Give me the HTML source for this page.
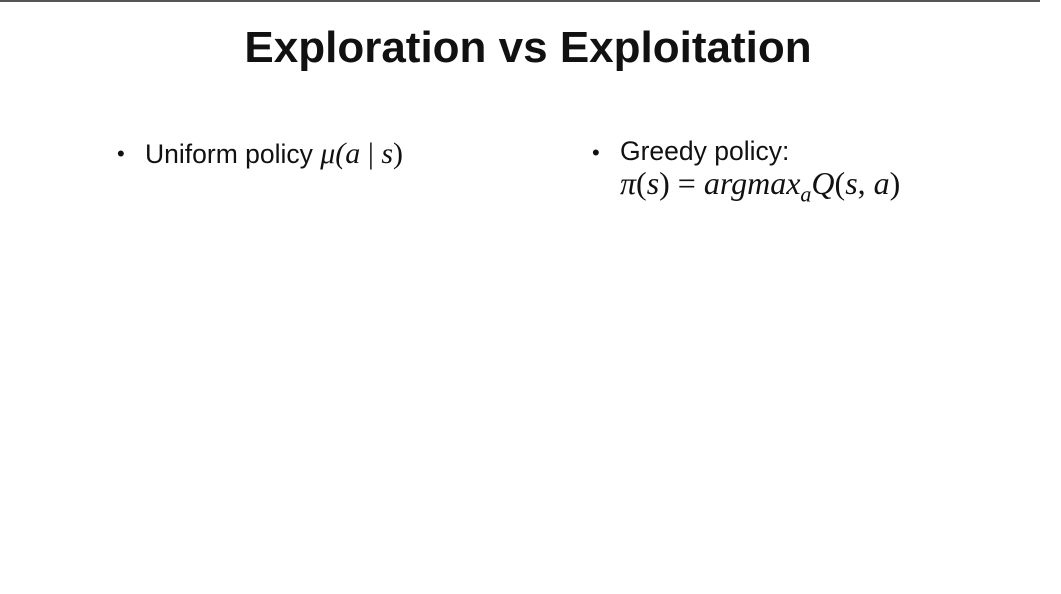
<!DOCTYPE html>
<html><head><meta charset="utf-8"><style>
html,body{margin:0;padding:0;width:1061px;height:594px;background:#fff;overflow:hidden;position:relative;font-family:"Liberation Sans",sans-serif;color:#111}
.top{position:absolute;left:0;top:0;width:1040px;height:2px;background:#555}
.t{position:absolute;left:0;width:1056px;text-align:center;top:23px;font-size:44px;font-weight:bold;letter-spacing:0}
.a{position:absolute;white-space:nowrap;font-size:26.5px;letter-spacing:0}
.m{font-family:"Liberation Serif",serif;font-style:italic;font-size:30px;letter-spacing:0}
.b{position:absolute;font-size:22px}
</style></head><body>
<div class="top"></div>
<div class="t">Exploration vs Exploitation</div>
<div class="b" style="left:117px;top:141px">•</div>
<div class="a" style="left:145px;top:137px">Uniform policy <span class="m">μ(a</span><span class="m" style="font-style:normal"> | </span><span class="m">s</span><span class="m" style="font-style:normal">)</span></div>
<div class="b" style="left:592px;top:140px">•</div>
<div class="a" style="left:620px;top:136px">Greedy policy:</div>
<div class="a m" style="left:620px;top:165px;font-size:32px">π<span style="font-style:normal">(</span>s<span style="font-style:normal">) = </span>argmax<sub style="font-size:22px">a</sub>Q<span style="font-style:normal">(</span>s<span style="font-style:normal">, </span>a<span style="font-style:normal">)</span></div>
</body></html>
